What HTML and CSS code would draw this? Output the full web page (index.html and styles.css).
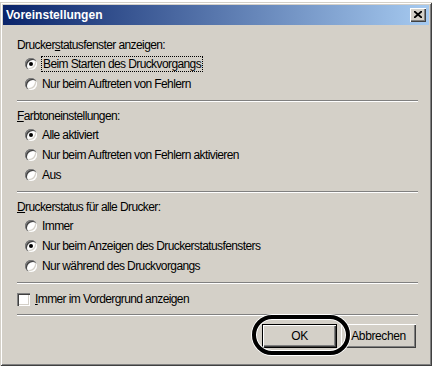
FILE: index.html
```html
<!DOCTYPE html>
<html lang="de">
<head>
    <meta charset="UTF-8">
    <title>Voreinstellungen</title>
    <link rel="stylesheet" href="styles.css">
</head>
<body>
    <div class="window">
        <div class="titlebar">
            <span class="title">Voreinstellungen</span>
            <span class="close">
                <svg width="8" height="7" viewBox="0 0 8 7"><path d="M0 0 L8 7 M8 0 L0 7" stroke="#000" stroke-width="1.8"/></svg>
            </span>
        </div>
        <div class="content">
            <div class="group">
                <div class="label">Drucker<u>s</u>tatusfenster anzeigen:</div>
                <div class="option"><span class="radio checked"></span><span class="focus">Beim Starten des Druckvorgangs</span></div>
                <div class="option"><span class="radio"></span><span>Nur beim Auftreten von Fehlern</span></div>
            </div>
            <div class="sep"></div>
            <div class="group">
                <div class="label"><u>F</u>arbtoneinstellungen:</div>
                <div class="option"><span class="radio checked"></span><span>Alle aktiviert</span></div>
                <div class="option"><span class="radio"></span><span>Nur beim Auftreten von Fehlern aktivieren</span></div>
                <div class="option"><span class="radio"></span><span>Aus</span></div>
            </div>
            <div class="sep"></div>
            <div class="group">
                <div class="label"><u>D</u>ruckerstatus für alle Drucker:</div>
                <div class="option"><span class="radio"></span><span>Immer</span></div>
                <div class="option"><span class="radio checked"></span><span>Nur beim Anzeigen des Druckerstatusfensters</span></div>
                <div class="option"><span class="radio"></span><span>Nur während des Druckvorgangs</span></div>
            </div>
            <div class="sep"></div>
            <div class="check-row"><span class="checkbox"></span><span><u>I</u>mmer im Vordergrund anzeigen</span></div>
            <div class="sep"></div>
            <div class="buttons">
                <div class="btn-wrap">
                    <button class="btn default">OK</button>
                    <span class="mark"></span>
                </div>
                <button class="btn">Abbrechen</button>
            </div>
        </div>
    </div>
</body>
</html>
```

FILE: styles.css
```css
body {
    margin: 0;
    background-color: #fff;
    font-family: "Liberation Sans", Arial, sans-serif;
    font-size: 12px;
    letter-spacing: -0.6px;
    color: #000;
}
.window {
    margin-top: 2px;
    width: 432px;
    height: 364px;
    box-sizing: border-box;
    padding: 3px;
    background-color: #d4d0c8;
    box-shadow: inset 1px 1px 0 #d4d0c8, inset -1px -1px 0 #404040,
                inset 2px 2px 0 #fff, inset -2px -2px 0 #808080;
}
.titlebar {
    height: 20px;
    display: flex;
    align-items: center;
    justify-content: space-between;
    padding: 0 3px 0 3px;
    background: linear-gradient(to right, #0a246a, #a6caf0);
}
.title {
    font-weight: bold;
    font-size: 12px;
    letter-spacing: 0;
    color: #fff;
}
.close {
    width: 16px;
    height: 14px;
    box-sizing: border-box;
    display: flex;
    align-items: center;
    justify-content: center;
    padding: 0 1px 1px 0;
    background-color: #d4d0c8;
    box-shadow: inset 1px 1px 0 #fff, inset -1px -1px 0 #404040, inset -2px -2px 0 #808080;
}
.content {
    padding: 11px 11px 0 14px;
}
.group {
    padding-bottom: 1px;
}
.label {
    height: 18px;
    line-height: 18px;
}
.option {
    height: 20px;
    display: flex;
    align-items: center;
    padding-left: 8px;
}
.radio {
    position: relative;
    width: 12px;
    height: 12px;
    margin-right: 5px;
    border-radius: 50%;
    background-color: #fff;
    box-shadow: inset 1px 1px 0 #808080, inset 2px 2px 0 #404040,
                inset -1px -1px 0 #fff, inset -2px -2px 0 #d4d0c8;
}
.radio.checked::after {
    content: "";
    position: absolute;
    left: 4px;
    top: 4px;
    width: 4px;
    height: 4px;
    border-radius: 50%;
    background-color: #000;
}
.focus {
    outline: 1px dotted #000;
    outline-offset: 0;
    padding: 0 1px;
    line-height: 14px;
}
.sep {
    height: 2px;
    margin: 5px 0 5px;
    border-top: 1px solid #808080;
    border-bottom: 1px solid #fff;
    box-sizing: border-box;
}
.check-row {
    height: 20px;
    margin-top: 3px;
    display: flex;
    align-items: center;
}
.checkbox {
    width: 13px;
    height: 13px;
    margin-right: 5px;
    background-color: #fff;
    box-shadow: inset 1px 1px 0 #808080, inset 2px 2px 0 #404040,
                inset -1px -1px 0 #fff, inset -2px -2px 0 #d4d0c8;
}
.buttons {
    display: flex;
    justify-content: flex-end;
    gap: 4px;
    margin-top: 8px;
    padding-right: 2px;
}
.btn-wrap {
    position: relative;
}
.btn {
    width: 75px;
    height: 24px;
    padding: 0;
    border: none;
    background-color: #d4d0c8;
    font-family: inherit;
    font-size: 12px;
    letter-spacing: -0.4px;
    color: #000;
    box-shadow: inset 1px 1px 0 #fff, inset -1px -1px 0 #404040, inset -2px -2px 0 #808080;
}
.btn.default {
    box-shadow: inset 0 0 0 1px #000, inset 2px 2px 0 #fff,
                inset -2px -2px 0 #404040, inset -3px -3px 0 #808080;
}
.mark {
    position: absolute;
    left: -10px;
    top: -9px;
    width: 98px;
    height: 40px;
    box-sizing: border-box;
    border: 4px solid #000;
    border-radius: 20px;
    box-shadow: 0 0 0 1px #fff, inset 0 0 0 1px #fff;
}
```
